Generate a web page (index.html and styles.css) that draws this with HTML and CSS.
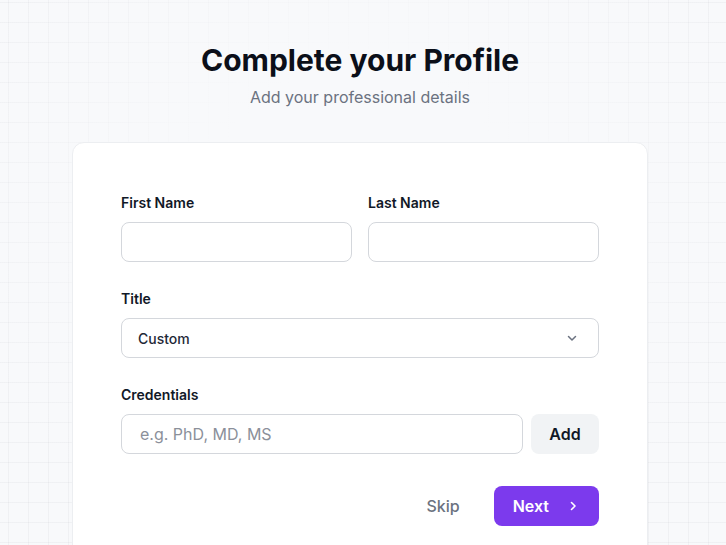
FILE: index.html
```html
<!DOCTYPE html>
<html lang="en">
<head>
<meta charset="utf-8">
<title>Complete your Profile</title>
<link rel="stylesheet" href="styles.css">
</head>
<body>
<main class="page">
  <div class="wrap">
    <header class="head">
      <h1 class="title">Complete your Profile</h1>
      <p class="subtitle">Add your professional details</p>
    </header>
    <section class="card">
      <div class="row">
        <div class="field">
          <label class="label">First Name</label>
          <input class="input" type="text">
        </div>
        <div class="field">
          <label class="label">Last Name</label>
          <input class="input" type="text">
        </div>
      </div>
      <div class="field">
        <label class="label">Title</label>
        <div class="select">
          <span class="select-value">Custom</span>
          <svg class="chev" width="16" height="16" viewBox="0 0 16 16" fill="none" stroke="#6b7280" stroke-width="1.5" stroke-linecap="round" stroke-linejoin="round"><path d="M4.5 6.5 8 10l3.5-3.5"/></svg>
        </div>
      </div>
      <div class="field">
        <label class="label">Credentials</label>
        <div class="cred">
          <input class="input cred-input" type="text" placeholder="e.g. PhD, MD, MS">
          <button class="btn-add" type="button">Add</button>
        </div>
      </div>
      <div class="actions">
        <button class="btn-skip" type="button">Skip</button>
        <button class="btn-next" type="button">Next
          <svg width="16" height="16" viewBox="0 0 16 16" fill="none" stroke="#ffffff" stroke-width="1.6" stroke-linecap="round" stroke-linejoin="round"><path d="M6.5 4.5 10 8l-3.5 3.5"/></svg>
        </button>
      </div>
    </section>
  </div>
</main>
</body>
</html>
```
FILE: styles.css
```css
* { box-sizing: border-box; }
html, body { margin: 0; padding: 0; }
body {
  font-family: Inter, "Noto Sans", "Liberation Sans", sans-serif;
  color: #111827;
  background-color: #f8f9fb;
  background-image:
    radial-gradient(ellipse 420px 380px at 360px 200px, #f8f9fb 35%, rgba(248,249,251,0) 100%),
    linear-gradient(to right, rgba(17,24,39,0.035) 1px, transparent 1px),
    linear-gradient(to bottom, rgba(17,24,39,0.035) 1px, transparent 1px);
  background-size: 100% 100%, 20px 20px, 20px 20px;
  background-position: 0 0, 8px 2px, 8px 2px;
  min-height: 545px;
  overflow: hidden;
}
.page {
  padding: 0 6px 0 0;
}
.wrap {
  width: 576px;
  margin: 0 auto;
  padding-top: 40px;
}
.head { text-align: center; }
.title {
  margin: 0;
  font-size: 30px;
  line-height: 40px;
  font-weight: 700;
  color: #0b0f19;
}
.subtitle {
  margin: 5px 0 0;
  font-size: 16px;
  line-height: 24px;
  color: #6b7280;
}
.card {
  margin-top: 33px;
  background: #ffffff;
  border: 1px solid #eceef1;
  border-radius: 12px;
  padding: 50px 48px 48px;
  display: flex;
  flex-direction: column;
  gap: 27px;
}
.row {
  display: grid;
  grid-template-columns: 1fr 1fr;
  gap: 16px;
}
.field { display: flex; flex-direction: column; }
.label {
  font-size: 14px;
  line-height: 20px;
  font-weight: 600;
  color: #111827;
  margin-bottom: 9px;
}
.input {
  height: 40px;
  border: 1px solid #d4d7dc;
  border-radius: 8px;
  padding: 0 18px;
  font: inherit;
  font-size: 16px;
  background: #fff;
  outline: none;
  width: 100%;
}
.input::placeholder { color: #8b909a; }
.select {
  height: 40px;
  border: 1px solid #d4d7dc;
  border-radius: 8px;
  padding: 0 18px 0 16px;
  display: flex;
  align-items: center;
  justify-content: space-between;
}
.select-value { font-size: 14px; color: #1f2937; font-weight: 500; }
.cred { display: flex; gap: 8px; }
.cred-input { flex: 1; }
.btn-add {
  width: 68px;
  height: 40px;
  border: none;
  border-radius: 8px;
  background: #f1f3f5;
  font: inherit;
  font-size: 16px;
  font-weight: 600;
  color: #111827;
}
.actions {
  margin-top: 5px;
  display: flex;
  justify-content: flex-end;
  align-items: center;
  gap: 18px;
}
.btn-skip {
  background: none;
  border: none;
  font: inherit;
  font-size: 16px;
  font-weight: 500;
  color: #6b7280;
  padding: 0 16px;
  height: 40px;
}
.btn-next {
  height: 40px;
  border: none;
  border-radius: 8px;
  background: #7c3aed;
  color: #fff;
  font: inherit;
  font-size: 16px;
  font-weight: 600;
  padding: 0 18px 0 19px;
  display: flex;
  align-items: center;
  gap: 16px;
}
```
